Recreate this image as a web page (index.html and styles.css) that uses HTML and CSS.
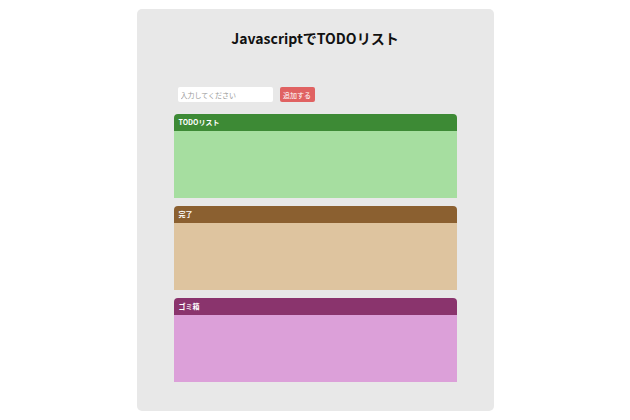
FILE: index.html
```html
<!DOCTYPE html>
<html lang="ja">
<head>
<meta charset="utf-8">
<title>Javascript TODO</title>
<link rel="stylesheet" href="styles.css">
</head>
<body>
<div class="app">
  <h1 class="title">JavascriptでTODOリスト</h1>
  <div class="form">
    <input class="input" type="text" placeholder="入力してください">
    <button class="add">追加する</button>
  </div>
  <section class="box todo">
    <div class="box-head">TODOリスト</div>
    <ul class="box-body"></ul>
  </section>
  <section class="box done">
    <div class="box-head">完了</div>
    <ul class="box-body"></ul>
  </section>
  <section class="box trash">
    <div class="box-head">ゴミ箱</div>
    <ul class="box-body"></ul>
  </section>
</div>
</body>
</html>
```
FILE: styles.css
```css
* { box-sizing: border-box; }
html, body { margin: 0; padding: 0; background: #fff; }
body {
  font-family: "Noto Sans CJK JP", "Noto Sans", sans-serif;
  padding-top: 9px;
}
.app {
  width: 357px;
  height: 402px;
  margin: 0 auto;
  background: #e8e8e8;
  border-radius: 5px;
  padding: 19px 37px 0;
}
.title {
  margin: 0;
  text-align: center;
  font-size: 14px;
  line-height: 20px;
  font-weight: 700;
  color: #111;
}
.form {
  display: flex;
  align-items: center;
  gap: 7px;
  margin: 39px 0 12px 4px;
  height: 15px;
}
.input {
  width: 95px;
  height: 15px;
  border: none;
  border-radius: 2px;
  background: #fff;
  padding: 0 3px;
  font-family: inherit;
  font-size: 7px;
  outline: none;
}
.input::placeholder { color: #999; }
.add {
  width: 35px;
  height: 15px;
  border: none;
  border-radius: 2px;
  background: #e06262;
  color: #fff;
  font-family: inherit;
  font-size: 7px;
  padding: 0;
}
.box {
  margin-bottom: 8px;
}
.box-head {
  height: 17px;
  line-height: 17px;
  padding-left: 5px;
  color: #fff;
  font-size: 7px;
  font-weight: 700;
  border-radius: 4px 4px 0 0;
}
.box-body {
  margin: 0;
  padding: 0;
  list-style: none;
  height: 67px;
}
.todo .box-head { background: #3d8a35; }
.todo .box-body { background: #a6dea0; }
.done .box-head { background: #8b6030; }
.done .box-body { background: #dec49f; }
.trash .box-head { background: #8a346d; }
.trash .box-body { background: #dca0d9; }
```
